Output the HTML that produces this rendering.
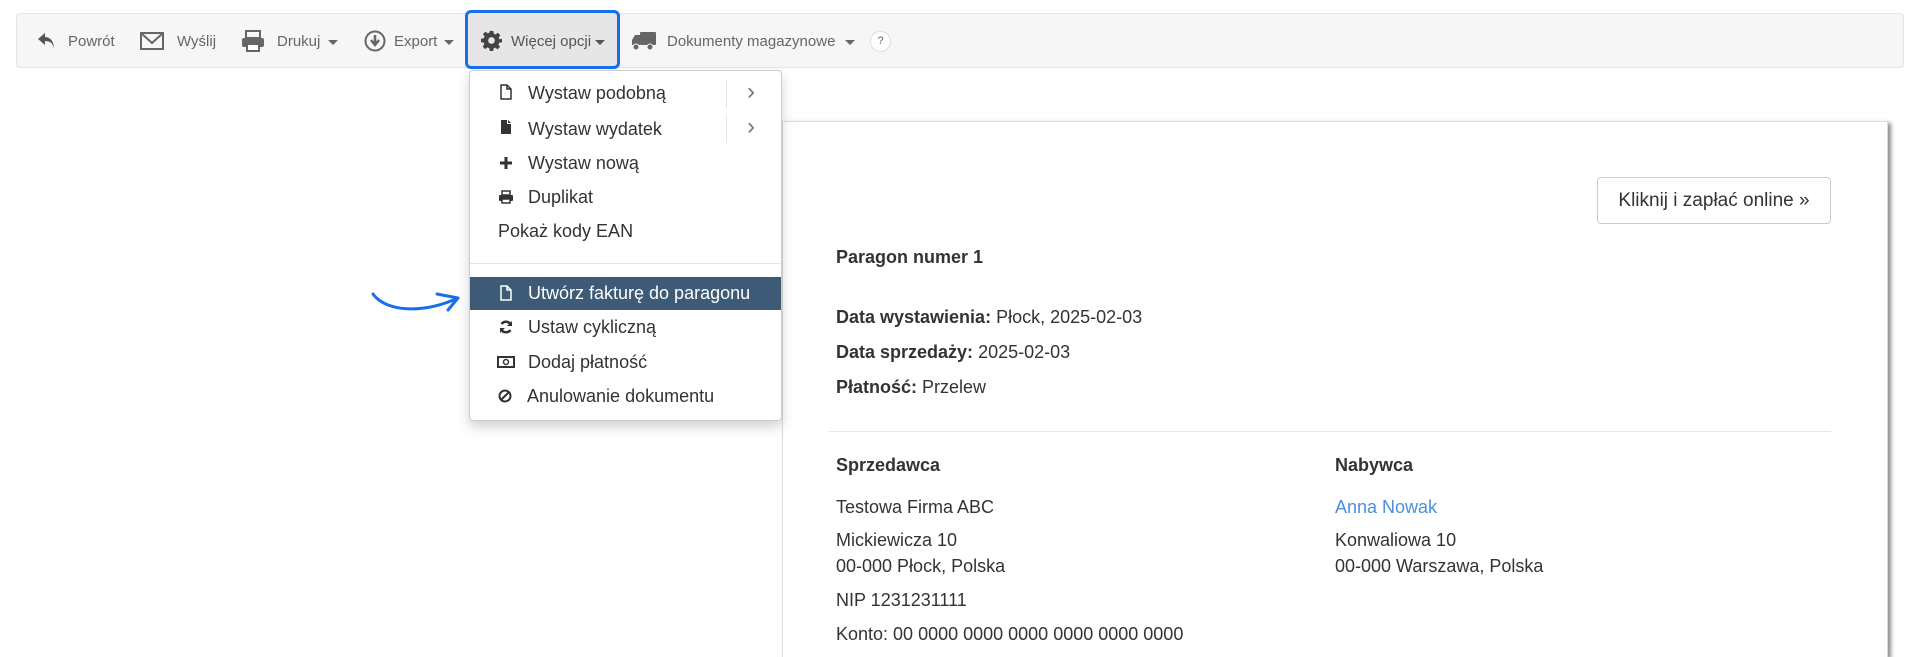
<!DOCTYPE html>
<html><head><meta charset="utf-8"><style>
*{margin:0;padding:0;box-sizing:border-box}
html{width:1920px;height:657px;overflow:hidden}
body{width:1920px;height:657px;overflow:hidden;background:#fff;font-family:"Liberation Sans",Arial,sans-serif;position:relative;color:#333}
.a{position:absolute;white-space:nowrap}
#tb{left:16px;top:13px;width:1888px;height:55px;background:#f6f6f6;border:1px solid #e4e4e4;border-radius:4px}
.t{font-size:15px;color:#666;line-height:18px;top:33px}
.car{width:0;height:0;border-left:5px solid transparent;border-right:5px solid transparent;border-top:5px solid #666;top:40px}
#hl{left:465px;top:10px;width:155px;height:59px;border:3px solid #1a6fe8;border-radius:6px;background:#e6e6e6}
#paper{left:782px;top:121px;width:1106px;height:536px;background:#fff;border:1px solid #ddd;border-bottom:none;box-shadow:3px 2px 4px rgba(0,0,0,.45)}
#dd{left:469px;top:70px;width:313px;height:351px;background:#fff;border:1px solid #ccc;border-radius:4px;box-shadow:0 6px 12px rgba(0,0,0,.18)}
.m{font-size:18px;line-height:20px;color:#333;left:528px}
.p{font-size:18px;line-height:20px;color:#333;left:836px}
b{font-weight:bold}
.chev{left:747px;font-size:24px;line-height:24px;color:#777}
</style></head><body>
<div class="a" id="tb"></div>
<div class="a" id="paper"></div>
<div class="a" id="hl"></div>

<svg class="a" style="left:37px;top:31px" width="19" height="20" viewBox="0 0 19 20"><path d="M8 2 L1 8 L8 14 V10 C13 10 16 12 17 18 C17 10 13 6 8 6 Z" fill="#555"/></svg>
<div class="a t" style="left:68px">Powrót</div>
<svg class="a" style="left:140px;top:32px" width="24" height="18" viewBox="0 0 24 18"><rect x="1" y="1" width="22" height="16" fill="none" stroke="#666" stroke-width="2"/><path d="M1 1 L12 11 L23 1" fill="none" stroke="#666" stroke-width="2"/></svg>
<div class="a t" style="left:177px">Wyślij</div>
<svg class="a" style="left:241px;top:30px" width="24" height="22" viewBox="0 0 24 22"><rect x="5" y="1" width="14" height="7" fill="none" stroke="#666" stroke-width="2"/><rect x="1" y="8" width="22" height="9" rx="2" fill="#666"/><rect x="6" y="14" width="12" height="7" fill="#fff" stroke="#666" stroke-width="2"/></svg>
<div class="a t" style="left:277px">Drukuj</div>
<div class="a car" style="left:328px"></div>
<svg class="a" style="left:364px;top:30px" width="22" height="22" viewBox="0 0 22 22"><circle cx="11" cy="11" r="9.5" fill="none" stroke="#666" stroke-width="2"/><path d="M11 5 V13 M7 10 L11 15 L15 10" fill="none" stroke="#666" stroke-width="2.5"/></svg>
<div class="a t" style="left:394px">Export</div>
<div class="a car" style="left:444px"></div>
<svg class="a" style="left:481px;top:30px" width="21" height="21" viewBox="0 0 24 24"><path fill="#444" d="M10 1h4l.6 3.2 2 .9 2.7-1.9 2.8 2.8-1.9 2.7.9 2L24 10v4l-3.2.6-.9 2 1.9 2.7-2.8 2.8-2.7-1.9-2 .9L14 24h-4l-.6-3.2-2-.9-2.7 1.9-2.8-2.8 1.9-2.7-.9-2L0 14v-4l3.2-.6.9-2L2.2 4.7 5 1.9l2.7 1.9 2-.9z"/><circle cx="12" cy="12" r="3.8" fill="#e6e6e6"/></svg>
<div class="a t" style="left:511px;color:#555">Więcej opcji</div>
<div class="a car" style="left:595px;border-top-color:#555"></div>
<svg class="a" style="left:631px;top:31px" width="25" height="20" viewBox="0 0 25 20"><rect x="9" y="1" width="16" height="13" rx="1" fill="#666"/><path d="M1 9 L4 4 H9 V14 H1 Z" fill="#666"/><circle cx="5" cy="16" r="3" fill="#666" stroke="#f6f6f6" stroke-width="1"/><circle cx="19" cy="16" r="3" fill="#666" stroke="#f6f6f6" stroke-width="1"/></svg>
<div class="a t" style="left:667px">Dokumenty magazynowe</div>
<div class="a car" style="left:845px"></div>
<div class="a" style="left:870px;top:31px;width:21px;height:21px;border:1px solid #ddd;border-radius:50%;background:#fff;font-size:11px;color:#666;text-align:center;line-height:19px">?</div>

<div class="a" style="left:1597px;top:177px;width:234px;height:47px;border:1px solid #ccc;border-radius:4px;background:#fff;font-size:19px;color:#333;text-align:center;line-height:45px">Kliknij i zapłać online »</div>
<div class="a p" style="top:247px"><b>Paragon numer 1</b></div>
<div class="a p" style="top:307px"><b>Data wystawienia:</b> Płock, 2025-02-03</div>
<div class="a p" style="top:342px"><b>Data sprzedaży:</b> 2025-02-03</div>
<div class="a p" style="top:377px"><b>Płatność:</b> Przelew</div>
<div class="a" style="left:828px;top:431px;width:1003px;height:1px;background:#e8e8e8"></div>
<div class="a p" style="top:455px"><b>Sprzedawca</b></div>
<div class="a p" style="top:497px">Testowa Firma ABC</div>
<div class="a p" style="top:530px">Mickiewicza 10</div>
<div class="a p" style="top:556px">00-000 Płock, Polska</div>
<div class="a p" style="top:590px">NIP 1231231111</div>
<div class="a p" style="top:624px">Konto: 00 0000 0000 0000 0000 0000 0000</div>
<div class="a p" style="left:1335px;top:455px"><b>Nabywca</b></div>
<div class="a p" style="left:1335px;top:497px;color:#4a90d9">Anna Nowak</div>
<div class="a p" style="left:1335px;top:530px">Konwaliowa 10</div>
<div class="a p" style="left:1335px;top:556px">00-000 Warszawa, Polska</div>

<div class="a" id="dd"></div>
<svg class="a" style="left:500px;top:84px" width="12" height="16" viewBox="0 0 12 16"><path d="M1 1 H7 L11 5 V15 H1 Z M7 1 V5 H11" fill="none" stroke="#333" stroke-width="1.5"/></svg>
<div class="a m" style="top:83px">Wystaw podobną</div>
<svg class="a" style="left:500px;top:119px" width="12" height="16" viewBox="0 0 12 16"><path d="M1 1 H7 V5 H11 V15 H1 Z M8 1 L11 4 H8 Z" fill="#333"/></svg>
<div class="a m" style="top:119px">Wystaw wydatek</div>
<div class="a" style="left:726px;top:80px;width:1px;height:28px;background:#e3e3e3"></div>
<div class="a" style="left:726px;top:115px;width:1px;height:28px;background:#e3e3e3"></div>
<div class="a chev" style="top:80px">›</div>
<div class="a chev" style="top:115px">›</div>
<svg class="a" style="left:499px;top:156px" width="14" height="14" viewBox="0 0 14 14"><path d="M7 1 V13 M1 7 H13" stroke="#333" stroke-width="3"/></svg>
<div class="a m" style="top:153px">Wystaw nową</div>
<svg class="a" style="left:498px;top:190px" width="16" height="14" viewBox="0 0 16 14"><rect x="4" y="1" width="8" height="4" fill="none" stroke="#333" stroke-width="1.5"/><rect x="1" y="5" width="14" height="6" rx="1" fill="#333"/><rect x="4" y="9" width="8" height="4" fill="#fff" stroke="#333" stroke-width="1.5"/></svg>
<div class="a m" style="top:187px">Duplikat</div>
<div class="a m" style="left:498px;top:221px">Pokaż kody EAN</div>
<div class="a" style="left:470px;top:263px;width:311px;height:1px;background:#e5e5e5"></div>
<div class="a" style="left:470px;top:277px;width:311px;height:33px;background:#3d5a77"></div>
<svg class="a" style="left:500px;top:285px" width="12" height="16" viewBox="0 0 12 16"><path d="M1 1 H7 L11 5 V15 H1 Z M7 1 V5 H11" fill="none" stroke="#fff" stroke-width="1.5"/></svg>
<div class="a m" style="top:283px;color:#fff">Utwórz fakturę do paragonu</div>
<svg class="a" style="left:499px;top:320px" width="14" height="14" viewBox="0 0 14 14"><path d="M12 5 A5.5 5.5 0 0 0 2.5 4 M2 9 A5.5 5.5 0 0 0 11.5 10" fill="none" stroke="#333" stroke-width="2.5"/><path d="M13 1 V6 H8 Z M1 13 V8 H6 Z" fill="#333"/></svg>
<div class="a m" style="top:317px">Ustaw cykliczną</div>
<svg class="a" style="left:497px;top:356px" width="18" height="12" viewBox="0 0 18 12"><rect x="1" y="1" width="16" height="10" fill="none" stroke="#333" stroke-width="2"/><circle cx="9" cy="6" r="2.5" fill="none" stroke="#333" stroke-width="1.5"/></svg>
<div class="a m" style="top:352px">Dodaj płatność</div>
<svg class="a" style="left:498px;top:389px" width="14" height="14" viewBox="0 0 14 14"><circle cx="7" cy="7" r="5.5" fill="none" stroke="#333" stroke-width="2"/><path d="M3 11 L11 3" stroke="#333" stroke-width="2"/></svg>
<div class="a m" style="left:527px;top:386px">Anulowanie dokumentu</div>

<svg class="a" style="left:368px;top:288px" width="95" height="30" viewBox="0 0 95 30"><path d="M5 6 C18 24 55 26 90 10" fill="none" stroke="#1a6fe8" stroke-width="3" stroke-linecap="round"/><path d="M69 6 L90 10 L80 22" fill="none" stroke="#1a6fe8" stroke-width="3" stroke-linecap="round" stroke-linejoin="round"/></svg>
</body></html>
